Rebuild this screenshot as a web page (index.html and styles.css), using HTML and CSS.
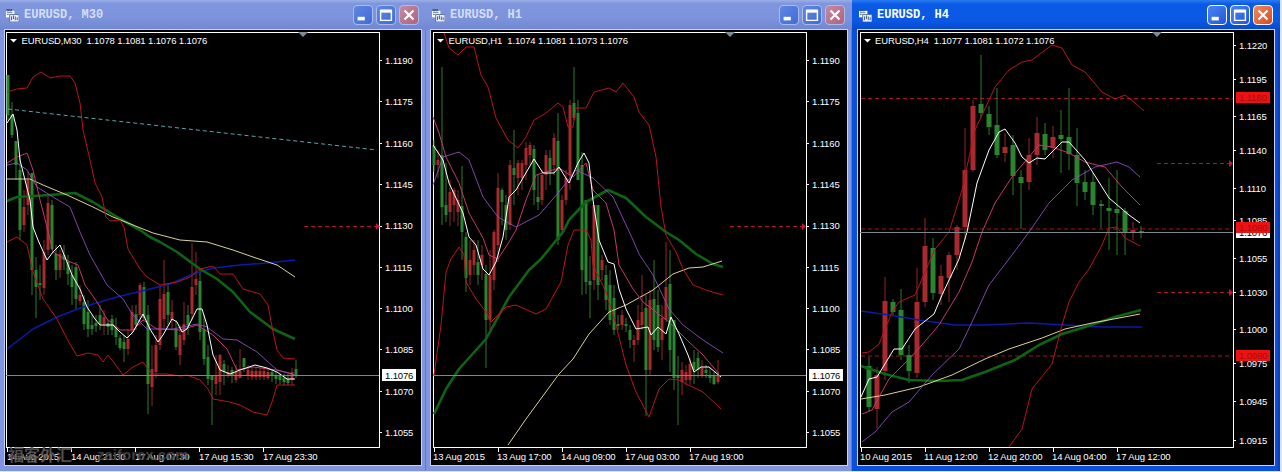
FILE: index.html
```html
<!DOCTYPE html>
<html lang="en">
<head>
  <meta charset="UTF-8" />
  <title>EURUSD charts</title>
  <link rel="stylesheet" href="styles.css">
</head>
<body>
  <svg class="defs" width="0" height="0" aria-hidden="true">
    <symbol id="app-icon" viewBox="0 0 14 14">
      <rect x="0" y="2" width="9" height="7" fill="#fff" />
      <rect x="4" y="6" width="10" height="8" fill="#eef2fa" stroke="#5a6f9c" />
      <path d="M1 0h2v2H1zM4 0h2v2H4zM6 8v4M8 7v4M10 8v4M12 9v3" stroke="#39507e" fill="none" />
      <path d="M1 4h6M1 6h2" stroke="#5a6f9c" fill="none" />
    </symbol>
    <symbol id="btn-min" viewBox="0 0 20 20"><rect x="4" y="12" width="8" height="4" fill="#fff" /></symbol>
    <symbol id="btn-max" viewBox="0 0 20 20"><path d="M4 5h12v11H4z M4 6.5h12" fill="none" stroke="#fff" stroke-width="1.6" /><rect x="4" y="4" width="12" height="3" fill="#fff" /></symbol>
    <symbol id="btn-close" viewBox="0 0 20 20"><path d="M5 5l10 10M15 5L5 15" stroke="#fff" stroke-width="2.4" /></symbol>
  </svg>

  <div class="desktop">

    <!-- M30 -->
    <div class="win">
      <div class="titlebar">
        <svg class="app-icon"><use href="#app-icon" /></svg>
        <span class="title">EURUSD, M30</span>
        <div class="buttons">
          <span class="btn"><svg><use href="#btn-min" /></svg></span>
          <span class="btn"><svg><use href="#btn-max" /></svg></span>
          <span class="btn close"><svg><use href="#btn-close" /></svg></span>
        </div>
      </div>
      <div class="client">
        <svg class="chart" viewBox="5 30 416 435">
          <rect class="frame" x="6.5" y="32.5" width="373" height="415" />
          <path class="marks" d="M379 60.5h3M379 101.5h3M379 143.5h3M379 184.5h3M379 226.5h3M379 267.5h3M379 308.5h3M379 349.5h3M379 391.5h3M379 432.5h3M7.5 447v5M71.5 447v5M135.5 447v5M199.5 447v5M263.5 447v5" />
          <path class="shift" d="M298 32h10l-5 5z" />
          <path class="wick-g" d="M8 75V120M12 102V138M16 141V180M20 155V240M32 173V295M36 257V318M40 265V300M52 200V250M56 245V280M64 245V270M68 255V285M72 265V305M76 262V310M84 295V330M88 300V337M92 315V335M96 315V332M100 305V330M108 320V335M112 315V335M116 318V345M120 335V350M124 335V362M136 305V330M144 282V320M148 305V414M168 285V325M176 320V350M188 305V335M200 268V340M204 315V365M208 345V385M212 375V425M224 360V385M232 367V383M244 358V372M272 370V382M276 372V384M280 373V384M284 374V385M288 374V385M296 360V378" />
          <path class="wick-r" d="M24 190V232M28 172V215M44 240V295M48 195V255M60 250V278M80 285V305M104 310V335M128 330V355M132 305V335M140 283V325M152 345V406M156 335V378M160 285V350M164 260V330M172 300V330M180 325V365M184 302V345M192 243V320M196 252V295M216 355V395M220 354V395M228 365V378M236 365V383M240 349V375M248 365V380M252 368V380M256 368V380M260 368V380M264 368V380M268 368V380M292 368V385" />
          <path class="body-g" d="M8 75V115M12 115V135M16 141V165M20 170V230M32 173V270M36 270V287M40 283V285M52 205V249M56 254V270M64 255V260M68 262V274M72 275V287M76 267V299M84 302V324M88 312V329M92 325V329M96 323V326M100 315V324M108 323V327M112 319V330M116 327V337M120 338V348M124 342V349M136 314V325M144 287V318M148 315V384M168 292V315M176 329V347M188 315V325M200 281V332M204 329V359M208 357V379M212 375V380M224 364V372M232 370V376M244 358V367M272 372V376M276 375V379M280 376V380M284 378V382M288 379V383M296 369V376" />
          <path class="body-r" d="M24 207V225M28 180V205M44 252V288M48 203V250M60 254V270M80 295V301M104 317V324M128 339V349M132 312V330M140 285V315M152 369V387M156 345V372M160 299V345M164 294V319M172 312V320M180 335V355M184 324V340M192 287V314M196 279V285M216 375V384M220 355V382M228 372V376M236 372V380M240 371V378M248 370V376M252 371V377M256 371V377M260 371V377M264 371V377M268 372V378M292 372V380" />
          <polyline class="l-blue" points="7,349 33,329 57,317 83,307 117,297 150,289 170,284 193,274 213,268 240,265 267,263 295,260" />
          <polyline class="l-green" points="7,201 17,197 50,195 75,193 93,202 117,217 140,230 150,237 160,242 177,252 200,269 217,279 233,292 250,312 273,329 295,339" />
          <polyline class="l-yellow" points="7,179 30,179 43,185 67,195 93,207 113,217 133,225 153,233 180,240 207,242 233,250 253,257 277,265 295,277" />
          <polyline class="l-red" points="7,92 17,89 27,88 33,77 41,72 50,78 60,76 70,76 75,83 80,103 83,130 90,160 95,183 102,197 106,217 110,221 120,220 124,227 128,249 140,269 147,277 160,285 177,282 190,277 200,269 213,266 220,274 233,274 243,289 260,294 268,305 273,332 277,350 283,358 295,359" />
          <polyline class="l-red" points="7,242 17,237 27,245 33,272 43,299 57,319 67,339 77,356 88,353 98,355 103,362 108,355 115,364 123,375 133,367 143,362 148,369 153,374 167,374 180,376 187,375 200,380 208,389 213,399 230,402 240,405 253,412 267,415 272,402 277,385 295,385" />
          <polyline class="l-pink" points="7,163 17,157 27,153 33,170 40,200 47,227 53,252 68,261 78,265 85,285 97,302 107,319 120,330 133,330 143,320 157,329 180,330 197,325 213,335 227,349 237,370 253,367 277,370 293,374" />
          <polyline class="l-purple" points="7,165 17,163 27,170 37,187 53,197 70,207 80,232 90,255 107,285 123,299 133,315 147,329 173,329 197,324 207,327 223,339 237,340 257,352 277,370 295,375" />
          <polyline class="l-white" points="7,123 13,114 17,130 20,160 25,180 30,200 33,227 38,240 42,249 47,260 53,252 60,245 65,257 72,275 80,289 87,307 95,319 100,325 113,325 120,332 127,338 133,332 143,314 150,329 158,342 163,335 172,319 177,322 182,332 187,329 197,309 202,309 207,325 213,355 220,370 230,374 240,370 255,365 267,368 277,372 287,379 295,379" />
          <path class="l-cyan" d="M8 109L377 150" />
          <path class="level" d="M304 226.5H376" />
          <path class="arrow" d="M376 223l4 3.5-4 3.5z" />
          <path class="price-line" d="M6 375.5H379" />
          <path class="menu-arrow" d="M10 39h7l-3.5 3.5z" />
          <text class="txt" x="21.5" y="44">EURUSD,M30&#160;&#160;1.1078 1.1081 1.1076 1.1076</text>
          <text class="txt" x="385" y="64">1.1190</text>
          <text class="txt" x="385" y="105">1.1175</text>
          <text class="txt" x="385" y="147">1.1160</text>
          <text class="txt" x="385" y="188">1.1145</text>
          <text class="txt" x="385" y="229">1.1130</text>
          <text class="txt" x="385" y="271">1.1115</text>
          <text class="txt" x="385" y="312">1.1100</text>
          <text class="txt" x="385" y="353">1.1085</text>
          <text class="txt" x="385" y="395">1.1070</text>
          <text class="txt" x="385" y="436">1.1055</text>
          <rect class="now" x="382" y="369" width="34" height="12" />
          <text class="txt dark" x="385" y="379">1.1076</text>
          <text class="txt" x="7" y="460">14 Aug 2015</text>
          <text class="txt" x="71" y="460">14 Aug 21:30</text>
          <text class="txt" x="135" y="460">17 Aug 07:30</text>
          <text class="txt" x="199" y="460">17 Aug 15:30</text>
          <text class="txt" x="263" y="460">17 Aug 23:30</text>
          <text class="stamp" x="8" y="461">福客外汇</text>
          <text class="stamp latin" x="97" y="460">zaiforex.com</text>
        </svg>
      </div>
    </div>

    <!-- H1 -->
    <div class="win">
      <div class="titlebar">
        <svg class="app-icon"><use href="#app-icon" /></svg>
        <span class="title">EURUSD, H1</span>
        <div class="buttons">
          <span class="btn"><svg><use href="#btn-min" /></svg></span>
          <span class="btn"><svg><use href="#btn-max" /></svg></span>
          <span class="btn close"><svg><use href="#btn-close" /></svg></span>
        </div>
      </div>
      <div class="client">
        <svg class="chart" viewBox="431 30 416 435">
          <rect class="frame" x="433.5" y="32.5" width="373" height="415" />
          <path class="marks" d="M806 60.5h3M806 101.5h3M806 143.5h3M806 184.5h3M806 226.5h3M806 267.5h3M806 308.5h3M806 349.5h3M806 391.5h3M806 432.5h3M434.5 447v5M498.5 447v5M562.5 447v5M626.5 447v5M690.5 447v5" />
          <path class="shift" d="M725 32h10l-5 5z" />
          <path class="wick-g" d="M434 140V172M442 67V225M446 163V222M462 166V260M466 232V292M478 240V285M486 265V368M502 188V225M506 195V240M514 130V205M534 145V205M538 175V210M550 150V185M558 113V245M574 67V120M578 100V180M582 152V295M586 200V294M590 256V318M598 205V300M606 265V310M610 270V325M614 285V335M618 315V330M626 318V332M630 325V348M646 295V416M654 260V350M658 290V352M670 250V372M674 320V390M678 356V425M694 350V384M698 352V378M706 365V378M710 368V383M714 372V385" />
          <path class="wick-r" d="M438 150V178M450 180V226M454 188V222M458 190V226M470 240V285M474 240V275M482 245V280M490 250V330M494 230V290M498 173V262M510 160V230M518 160V195M522 160V190M526 142V180M530 142V165M542 170V205M546 150V190M554 133V175M562 195V235M566 170V205M570 100V190M594 205V290M602 255V280M622 310V330M634 335V362M638 305V345M642 275V330M650 290V375M662 305V360M666 242V322M682 362V395M686 365V385M690 358V385M702 360V378M718 360V384" />
          <path class="body-g" d="M434 146V165M442 155V207M446 205V215M462 206V232M466 237V278M478 262V275M486 274V320M502 190V202M506 205V230M514 168V175M534 149V190M538 197V202M550 158V172M558 141V240M574 103V118M578 113V180M582 165V270M586 200V282M590 281V285M598 205V285M606 275V300M610 285V320M614 298V330M618 324V326M626 324V326M630 330V340M646 308V370M654 299V340M658 305V347M670 284V350M674 320V378M678 375V378M694 362V370M698 358V370M706 370V373M710 375V378M714 376V384" />
          <path class="body-r" d="M438 160V165M450 192V212M454 190V205M458 200V212M470 260V275M474 250V265M482 255V265M490 275V320M494 232V280M498 188V245M510 165V225M518 163V178M522 163V178M526 148V165M530 145V155M542 175V200M546 155V175M554 138V165M562 200V230M566 178V200M570 105V175M594 205V280M602 260V270M622 315V325M634 340V345M638 320V340M642 312V325M650 300V370M662 318V340M666 287V320M682 370V382M686 372V380M690 364V380M702 368V375M718 375V382" />
          <polyline class="l-green" points="434,414 446,389 459,369 486,339 509,297 529,270 541,259 563,232 569,220 586,202 608,190 626,198 646,217 666,232 679,240 696,254 713,264 723,267" />
          <polyline class="l-yellow" points="508,445 526,419 559,374 573,359 589,334 609,312 626,305 653,290 673,274 689,268 703,267 722,261" />
          <polyline class="l-red" points="444,33 449,48 458,55 466,47 474,47 481,75 488,87 496,118 508,140 518,148 526,137 534,120 546,113 558,103 563,107 568,127 573,127 576,108 586,108 594,92 609,88 616,92 623,83 634,97 639,112 649,125 656,157 661,207 666,235 676,252 683,269 693,285 709,291 723,295" />
          <polyline class="l-red" points="434,375 441,325 446,272 451,259 459,247 464,255 466,282 476,299 486,312 491,322 506,307 516,305 536,314 546,309 561,282 568,245 574,230 586,230 591,240 593,265 606,292 616,325 626,365 636,392 649,417 659,389 669,379 679,380 686,384 703,392 721,409" />
          <polyline class="l-pink" points="433,117 439,133 446,157 459,183 469,213 483,238 489,255 498,259 509,242 516,230 526,200 536,175 559,168 573,177 586,163 593,190 606,203 614,230 619,265 633,289 643,302 656,312 669,322 689,342 703,355 719,374" />
          <polyline class="l-purple" points="433,185 443,157 459,152 469,160 483,197 498,217 516,227 539,215 559,192 576,170 593,178 613,197 633,240 639,254 653,275 669,309 683,325 703,340 723,353" />
          <polyline class="l-white" points="433,145 443,160 449,183 463,213 469,237 476,245 483,269 489,275 496,262 503,237 509,197 516,190 534,159 543,173 554,173 559,167 569,183 578,163 584,153 589,163 593,200 599,240 601,245 608,262 614,264 619,289 626,309 636,329 648,327 651,335 658,327 666,334 671,317 679,334 688,355 694,372 701,367 709,367 721,377" />
          <path class="level" d="M730 226.5H802" />
          <path class="arrow" d="M802 223l4 3.5-4 3.5z" />
          <path class="price-line" d="M433 375.5H806" />
          <path class="menu-arrow" d="M437 39h7l-3.5 3.5z" />
          <text class="txt" x="448.5" y="44">EURUSD,H1&#160;&#160;1.1074 1.1081 1.1073 1.1076</text>
          <text class="txt" x="812" y="64">1.1190</text>
          <text class="txt" x="812" y="105">1.1175</text>
          <text class="txt" x="812" y="147">1.1160</text>
          <text class="txt" x="812" y="188">1.1145</text>
          <text class="txt" x="812" y="229">1.1130</text>
          <text class="txt" x="812" y="271">1.1115</text>
          <text class="txt" x="812" y="312">1.1100</text>
          <text class="txt" x="812" y="353">1.1085</text>
          <text class="txt" x="812" y="395">1.1070</text>
          <text class="txt" x="812" y="436">1.1055</text>
          <rect class="now" x="809" y="369" width="34" height="12" />
          <text class="txt dark" x="812" y="379">1.1076</text>
          <text class="txt" x="433" y="460">13 Aug 2015</text>
          <text class="txt" x="497" y="460">13 Aug 17:00</text>
          <text class="txt" x="561" y="460">14 Aug 09:00</text>
          <text class="txt" x="625" y="460">17 Aug 03:00</text>
          <text class="txt" x="689" y="460">17 Aug 19:00</text>
        </svg>
      </div>
    </div>

    <!-- H4, focused window -->
    <div class="win active">
      <div class="titlebar">
        <svg class="app-icon"><use href="#app-icon" /></svg>
        <span class="title">EURUSD, H4</span>
        <div class="buttons">
          <span class="btn"><svg><use href="#btn-min" /></svg></span>
          <span class="btn"><svg><use href="#btn-max" /></svg></span>
          <span class="btn close"><svg><use href="#btn-close" /></svg></span>
        </div>
      </div>
      <div class="client">
        <svg class="chart" viewBox="858 30 416 435">
          <rect class="frame" x="860.5" y="32.5" width="373" height="415" />
          <path class="marks" d="M1233 45.5h3M1233 79.5h3M1233 116.5h3M1233 150.5h3M1233 188.5h3M1233 220.5h3M1233 258.5h3M1233 292.5h3M1233 329.5h3M1233 363.5h3M1233 401.5h3M1233 440.5h3M861.5 447v5M925.5 447v5M989.5 447v5M1053.5 447v5M1117.5 447v5" />
          <path class="shift" d="M1152 32h10l-5 5z" />
          <path class="level wide" d="M861 98.5H1233M861 229H1233M861 356H1233" />
          <path class="wick-g" d="M869 357V412M893 299V316M901 289V360M909 345V383M933 238V300M981 55V118M989 106V135M997 88V158M1013 135V195M1021 170V229M1045 123V155M1061 110V173M1069 88V170M1077 128V206M1085 170V200M1093 173V215M1101 200V228M1109 178V250M1117 170V255M1125 208V255M1141 226V238" />
          <path class="wick-r" d="M877 367V428M885 277V380M917 268V378M925 218V307M941 265V305M949 252V302M957 225V270M965 128V240M973 100V172M1005 133V162M1029 138V190M1037 117V165M1053 126V158M1133 222V240" />
          <path class="body-g wide" d="M869 366V407M893 302V312M901 310V355M909 355V371M933 248V293M981 104V113M989 114V127M997 125V155M1013 145V176M1021 177V183M1045 134V150M1061 135V139M1069 137V154M1077 155V183M1085 182V192M1093 182V205M1109 208V211M1117 209V213M1125 211V232" />
          <path class="body-r wide" d="M877 375V409M885 301V371M917 302V373M925 246V302M941 276V294M949 255V278M957 227V255M965 170V227M973 106V170M1005 147V153M1029 155V182M1037 133V155M1053 137V148M1133 230V233" />
          <path class="doji" d="M1099 205h5M1139 232h5" />
          <polyline class="l-blue" points="861,311 889,315 919,320 955,325 985,325 1029,323 1065,325 1102,327 1142,327" />
          <polyline class="l-green" points="861,366 885,374 909,380 939,381 962,380 985,372 1015,360 1039,345 1062,334 1085,327 1115,317 1141,310" />
          <polyline class="l-yellow" points="861,399 885,395 919,387 952,375 985,359 1009,349 1042,338 1065,329 1092,323 1119,318 1140,314" />
          <polyline class="l-red" points="862,353 869,352 879,344 892,312 899,302 915,295 935,249 949,232 962,190 975,130 995,87 1009,70 1022,62 1032,60 1052,45 1062,48 1072,65 1085,72 1102,92 1115,99 1125,95 1134,102 1144,111" />
          <polyline class="l-red" points="1009,447 1022,429 1032,389 1052,364 1062,325 1069,302 1079,282 1089,269 1102,245 1109,228 1117,227 1125,238 1140,246" />
          <polyline class="l-pink" points="862,414 872,410 889,379 909,359 922,345 939,325 959,292 972,262 982,232 995,203 1012,177 1039,145 1052,147 1069,153 1085,162 1105,167 1122,187 1140,205" />
          <polyline class="l-purple" points="862,442 875,432 892,412 909,402 932,375 959,349 972,322 989,285 1012,255 1029,232 1049,203 1072,180 1095,167 1117,162 1129,167 1140,177" />
          <polyline class="l-white" points="861,397 869,379 877,377 894,349 902,349 915,329 934,314 942,295 959,259 967,232 977,183 989,150 999,132 1005,129 1015,143 1022,157 1029,163 1037,158 1045,159 1062,142 1069,142 1085,160 1109,198 1129,215 1140,223" />
          <path class="level" d="M1157 163.5H1229M1157 292.5H1229" />
          <path class="arrow" d="M1229 160l4 3.5-4 3.5zM1229 289l4 3.5-4 3.5z" />
          <path class="price-line" d="M860 232.5H1233" />
          <path class="menu-arrow" d="M864 39h7l-3.5 3.5z" />
          <text class="txt" x="875" y="44">EURUSD,H4&#160;&#160;1.1077 1.1081 1.1072 1.1076</text>
          <text class="txt" x="1239" y="49">1.1220</text>
          <text class="txt" x="1239" y="83">1.1195</text>
          <text class="txt" x="1239" y="120">1.1165</text>
          <text class="txt" x="1239" y="154">1.1140</text>
          <text class="txt" x="1239" y="192">1.1110</text>
          <text class="txt" x="1239" y="224">1.1085</text>
          <text class="txt" x="1239" y="262">1.1055</text>
          <text class="txt" x="1239" y="296">1.1030</text>
          <text class="txt" x="1239" y="333">1.1000</text>
          <text class="txt" x="1239" y="367">1.0975</text>
          <text class="txt" x="1239" y="405">1.0945</text>
          <text class="txt" x="1239" y="444">1.0915</text>
          <rect class="now" x="1236" y="226" width="34" height="12" />
          <text class="txt dark" x="1239" y="236">1.1076</text>
          <rect class="alert" x="1236" y="92" width="34" height="11" />
          <text class="txt on-alert" x="1239" y="101">1.1180</text>
          <rect class="alert" x="1236" y="222" width="34" height="11" />
          <text class="txt on-alert" x="1239" y="231">1.1080</text>
          <rect class="alert" x="1236" y="350" width="34" height="11" />
          <text class="txt on-alert" x="1239" y="359">1.0980</text>
          <text class="txt" x="860" y="460">10 Aug 2015</text>
          <text class="txt" x="924" y="460">11 Aug 12:00</text>
          <text class="txt" x="988" y="460">12 Aug 20:00</text>
          <text class="txt" x="1052" y="460">14 Aug 04:00</text>
          <text class="txt" x="1116" y="460">17 Aug 12:00</text>
        </svg>
      </div>
    </div>

  </div>
</body>
</html>
```

FILE: styles.css
```css
html, body { margin: 0; padding: 0; background: #dde4f8; }
.defs { position: absolute; }
.desktop { display: flex; width: 1282px; height: 471px; overflow: hidden; }

/* window chrome */
.win { width: 426px; height: 471px; box-sizing: border-box; padding: 0 5px 6px; display: flex; flex-direction: column; background: #7f95e0; box-shadow: inset -1px 0 0 #5f78d6; }
.win.active { width: 428px; padding: 0 6px 6px; background: #0a50de; box-shadow: inset -2px 0 0 #0a3fc0; }
.titlebar { height: 30px; flex: none; display: flex; align-items: center; box-sizing: border-box; background: linear-gradient(#9aaee6 0, #7f96de 12%, #7d94dd 60%, #6f86d0 100%); margin: 0 -5px; padding: 0 7px 0 6px; }
.win.active .titlebar { background: linear-gradient(#2a7bf0 0, #0a5ae6 14%, #0a58e4 70%, #0848c8 100%); margin: 0 -6px; padding: 0 7px; }
.app-icon { width: 13px; height: 13px; flex: none; margin-right: 5px; }
.title { font: bold 12px "Liberation Mono", monospace; color: #d4def5; white-space: pre; }
.win.active .title { color: #fff; }
.buttons { margin-left: auto; display: flex; gap: 3px; }
.btn { width: 20px; height: 20px; box-sizing: border-box; border: 1px solid #a9bcee; border-radius: 4px; background: linear-gradient(135deg, #5f87e2, #3f6bd6); display: block; }
.btn svg { width: 18px; height: 18px; display: block; }
.btn.close { background: linear-gradient(135deg, #c48aa0, #b0617f); }
.win.active .btn { border-color: #fff; background: linear-gradient(135deg, #4c85ee, #2058dc); }
.win.active .btn.close { background: linear-gradient(135deg, #ec8a62, #d94a22); }

/* chart area */
.client { width: 416px; height: 435px; flex: none; background: #000; box-shadow: 0 0 0 1px #c7d2f3; }
.chart { display: block; width: 416px; height: 435px; }
.frame { fill: none; stroke: #fff; stroke-width: 1; }
.marks { stroke: #fff; stroke-width: 1; fill: none; }
.shift { fill: #808a96; }
.menu-arrow { fill: #fff; }
.txt { font: 9.5px "Liberation Sans", Arial, sans-serif; fill: #fff; letter-spacing: -.13px; }
.txt.dark { fill: #000; }
.txt.on-alert { fill: #a50f0f; }
.now { fill: #fff; }
.alert { fill: #ee1111; }
.price-line { stroke: #7f878c; stroke-width: 1; fill: none; }
.level { stroke: #b0142c; stroke-width: 1; stroke-dasharray: 4 3; fill: none; }
.level.wide { stroke: #a5121f; }
.arrow { fill: #d0103a; }
.stamp { font: bold 16px "Noto Sans CJK SC", sans-serif; fill: #6a6a6a; opacity: .85; stroke: #222; stroke-width: .4; }
.stamp.latin { font: bold 15px "Liberation Sans", sans-serif; fill: #555; }

/* candles */
.wick-g { stroke: #2d7a2d; stroke-width: 1; fill: none; }
.wick-r { stroke: #8f2828; stroke-width: 1; fill: none; }
.body-g { stroke: #2b8430; stroke-width: 3; fill: none; }
.body-r { stroke: #a82a2e; stroke-width: 3; fill: none; }
.body-g.wide { stroke-width: 5; }
.body-r.wide { stroke-width: 5; }
.doji { stroke: #7fb87f; stroke-width: 1; fill: none; }

/* indicator lines */
polyline { fill: none; stroke-linejoin: round; }
.l-red { stroke: #b9141e; stroke-width: 1; }
.l-pink { stroke: #c0386a; stroke-width: 1; }
.l-purple { stroke: #8a4fb8; stroke-width: .9; }
.l-white { stroke: #fff; stroke-width: 1; }
.l-yellow { stroke: #f5e8a8; stroke-width: .9; }
.l-green { stroke: #0f6414; stroke-width: 2.6; }
.l-blue { stroke: #0b1ba6; stroke-width: 1.5; }
.l-cyan { stroke: #5fa5a8; stroke-width: 1; stroke-dasharray: 4 3; fill: none; }
```
